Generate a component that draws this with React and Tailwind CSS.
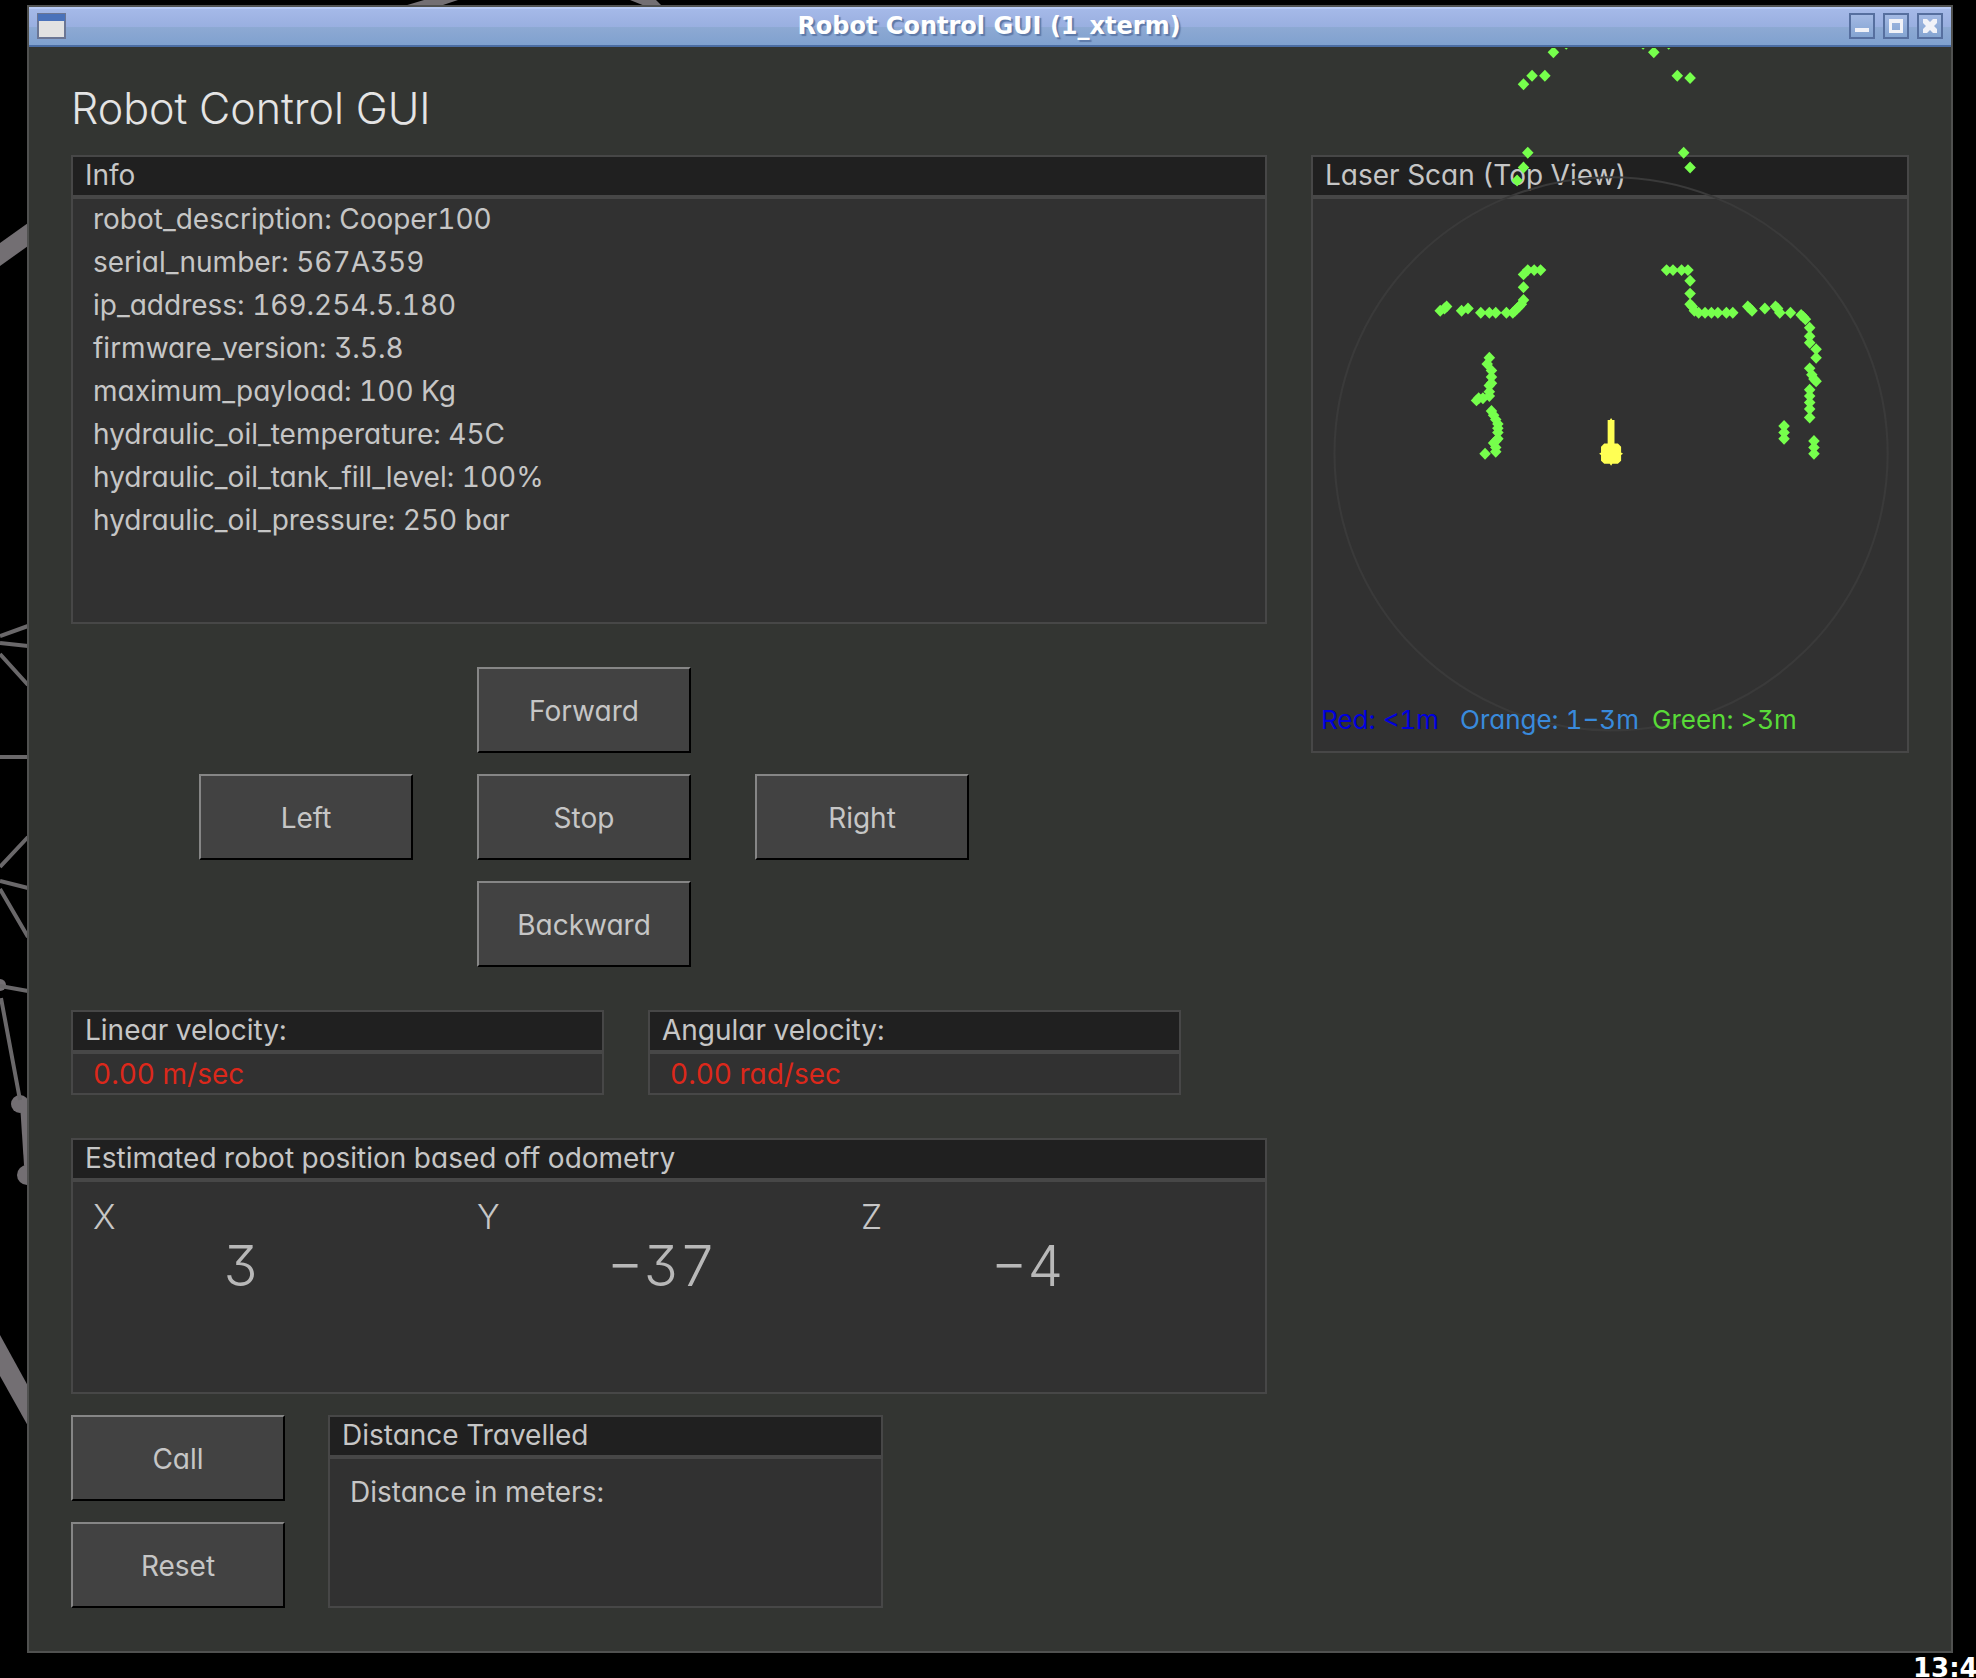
const INFO = [
  "robot_description: Cooper100",
  "serial_number: 567A359",
  "ip_address: 169.254.5.180",
  "firmware_version: 3.5.8",
  "maximum_payload: 100 Kg",
  "hydraulic_oil_temperature: 45C",
  "hydraulic_oil_tank_fill_level: 100%",
  "hydraulic_oil_pressure: 250 bar",
];

const POSITION = [
  { axis: "X", value: "3" },
  { axis: "Y", value: "−37" },
  { axis: "Z", value: "−4" },
];

// Laser returns as [x, y] in scan units, with the robot at the origin.
const SCAN = [
  [-27, -188], [-21, -192], [15, -192], [20, -188], [27, -192],
  [-37, -177], [-31, -177], [-41, -173], [31, -177], [37, -176],
  [-39, -141], [-41, -134], [-44, -128], [34, -141], [37, -134],
  [-33, -86], [-36, -86], [-39, -86], [-41, -84], [-41, -78], [-41, -72],
  [-42, -70], [-43, -69], [-44, -68], [-45, -67], [-46, -66], [-49, -66],
  [-54, -66], [-57, -66], [-61, -66],
  [-67, -68], [-70, -67], [-77, -69], [-78, -68], [-80, -67],
  [26, -86], [29, -86], [33, -86], [36, -86],
  [37, -81], [37, -75], [37, -70], [38, -69], [39, -67], [41, -66],
  [44, -66], [47, -66], [50, -66], [54, -66], [57, -66],
  [64, -69], [65, -68], [66, -67], [72, -68], [77, -69], [78, -68], [79, -66],
  [84, -66], [89, -65], [90, -64], [91, -63], [93, -59], [93, -55], [93, -52],
  [96, -49], [96, -45], [93, -40], [94, -37], [95, -35], [96, -34],
  [93, -30], [93, -27], [93, -24], [93, -21], [93, -17],
  [81, -13], [81, -10], [81, -7], [95, -6], [95, -3], [95, 0],
  [-57, -45], [-58, -42], [-56, -39], [-56, -36], [-56, -33], [-57, -32],
  [-57, -29], [-57, -27], [-60, -26], [-62, -26], [-63, -25],
  [-56, -20], [-55, -18], [-54, -16], [-53, -14], [-53, -12], [-53, -10],
  [-53, -7], [-54, -6], [-55, -5], [-54, -3], [-54, -1], [-59, 0],
];

function Panel({ title, className = "", children }) {
  return (
    <section className={`border-2 border-[#474747] bg-[#313131] ${className}`}>
      <h2 className="border-b-4 border-[#474747] bg-[#202020] px-3 pb-0.5 leading-[36px]">
        {title}
      </h2>
      {children}
    </section>
  );
}

function ControlButton({ children, className = "" }) {
  return (
    <button
      type="button"
      className={`h-[86px] w-full border-2 border-t-[#868686] border-r-black border-b-black border-l-[#868686] bg-[#424242] pt-0.5 ${className}`}
    >
      {children}
    </button>
  );
}

function TitleButton({ label, children }) {
  return (
    <button
      type="button"
      aria-label={label}
      className="flex size-[26px] items-center justify-center border-2 border-[#566f9f] bg-linear-to-b from-[#a3b9e4] to-[#84a4d1]"
    >
      <svg viewBox="0 0 14 14" className="size-[14px]" fill="#f1f2f8">
        {children}
      </svg>
    </button>
  );
}

function Wallpaper() {
  return (
    <svg
      aria-hidden="true"
      viewBox="0 0 1976 1678"
      preserveAspectRatio="xMinYMin slice"
      className="absolute inset-0 size-full"
    >
      <g fill="#736f73">
        <path d="M0 243 28 223V246L0 266Z" />
        <path d="M404 6 424 0H458L440 6Z" />
        <path d="M630 0H656L662 6H645Z" />
        <path d="M0 1335 28 1386V1426L0 1376Z" />
        <circle cx="0" cy="985" r="6" />
        <circle cx="20" cy="1104" r="9" />
        <circle cx="27" cy="1175" r="10" />
        <path d="M20 1104 28 1104V1175L24 1165Z" />
      </g>
      <g stroke="#6a686a" strokeWidth="4" fill="none">
        <path d="M0 636 28 626M0 643 28 646M0 654 28 685M0 757H28M0 867 28 837M0 881 28 888M0 889 28 937M0 986 28 991M1 998 20 1100" />
      </g>
    </svg>
  );
}

function LaserPlot() {
  return (
    <svg
      role="img"
      aria-label="Laser scan points around the robot"
      viewBox="-140.5 -190 280 330"
      className="pointer-events-none absolute inset-x-0 bottom-0 w-full"
    >
      <circle r="129.5" fill="none" stroke="#3a3a3a" strokeWidth="1" />
      <g fill="#76ff4c">
        {SCAN.map(([x, y], i) => (
          <path key={i} d={`M${x} ${y - 2.8}l2.7 2.8l-2.7 2.8l-2.7 -2.8z`} />
        ))}
      </g>
      <g fill="#ffff54">
        <path d="M-1.6 0V-15.8H-.6L0 -16.8 .6 -15.8H1.6V0Z" />
        <path d="M-3.2 -4.8H3.2L4.7 -3.3V-.6L5.6 0 4.7 .6V3.3L3.2 4.7H.6L0 5.6-.6 4.7H-3.2L-4.7 3.3V.6L-5.6 0-4.7 -.6V-3.3Z" />
      </g>
    </svg>
  );
}

export default function App() {
  return (
    <div className="relative flex min-h-screen flex-col overflow-hidden bg-black">
      <Wallpaper />

      <div className="relative mt-[5px] mr-[23px] ml-[27px] flex grow flex-col border-2 border-[#505150] bg-[#333532]">
        <header className="flex items-center border-t-2 border-b-2 border-t-[#b7c9f4] border-b-[#4b6da3] bg-[linear-gradient(#a5b9e8,#99afe0_50%,#8da9d3_50%,#80a1cf)] px-2 pb-0.5">
          <svg viewBox="0 0 29 26" className="h-[26px] w-[29px]">
            <rect x="1" y="1" width="27" height="24" fill="#e2e2e2" stroke="#6b7694" strokeWidth="2" />
            <rect x="1" y="1" width="27" height="7" fill="#4a72ba" />
          </svg>
          <div className="grow pl-[63px] text-center font-['DejaVu_Sans',sans-serif] text-[24px] leading-[34px] font-bold text-white [text-shadow:2px_2px_1px_#5d79a8]">
            Robot Control GUI (1_xterm)
          </div>
          <div className="flex gap-2">
            <TitleButton label="Minimize">
              <path d="M0 9H14V13H0Z" />
            </TitleButton>
            <TitleButton label="Maximize">
              <path fillRule="evenodd" d="M0 0H14V14H0ZM3 4V11H11V4Z" />
            </TitleButton>
            <TitleButton label="Close">
              <path d="M0 0H4L7 3 10 0H14V4L11 7 14 10V14H10L7 11 4 14H0V10L3 7 0 4Z" />
            </TitleButton>
          </div>
        </header>

        <main className="grow px-[42px] pt-[37px] pb-[43px] font-['Inter',sans-serif] text-[28px] text-[#c6c6c6] tabular-nums [font-feature-settings:'cv09','cv11']">
          <h1 className="mb-[23px] text-[43px] leading-[48px] font-light text-[#e4e4e4]">Robot Control GUI</h1>

          <div className="grid grid-cols-[2fr_1fr] items-start gap-[44px]">
            <div>
              <Panel title="Info">
                <ul className="flex flex-col gap-[3px] px-5 pb-[82px] leading-[40px]">
                  {INFO.map((line) => (
                    <li key={line}>{line}</li>
                  ))}
                </ul>
              </Panel>

              <div className="mt-[43px] ml-[128px] grid grid-cols-[repeat(3,214px)] gap-x-16 gap-y-[21px]">
                <ControlButton className="col-start-2">Forward</ControlButton>
                <ControlButton className="col-start-1">Left</ControlButton>
                <ControlButton>Stop</ControlButton>
                <ControlButton>Right</ControlButton>
                <ControlButton className="col-start-2">Backward</ControlButton>
              </div>

              <div className="mt-[43px] grid grid-cols-2 gap-[44px] pr-[86px]">
                <Panel title="Linear velocity:">
                  <p className="px-5 pt-0.5 leading-[37px] text-[#dc281b]">0.00 m/sec</p>
                </Panel>
                <Panel title="Angular velocity:">
                  <p className="px-5 pt-0.5 leading-[37px] text-[#dc281b]">0.00 rad/sec</p>
                </Panel>
              </div>

              <Panel title="Estimated robot position based off odometry" className="mt-[43px]">
                <dl className="grid grid-cols-3 px-5 pt-[15px] pb-[97px]">
                  {POSITION.map(({ axis, value }) => (
                    <div key={axis}>
                      <dt className="text-[34px] leading-[40px] font-light">{axis}</dt>
                      <dd className="pl-[130px] text-[56px] leading-[58px] font-light text-[#b8b8b8]">{value}</dd>
                    </div>
                  ))}
                </dl>
              </Panel>

              <div className="mt-[21px] flex gap-[43px]">
                <div className="flex w-[214px] flex-col gap-[21px]">
                  <ControlButton>Call</ControlButton>
                  <ControlButton>Reset</ControlButton>
                </div>
                <Panel title="Distance Travelled" className="w-[555px]">
                  <p className="px-5 pt-[13px] leading-[40px]">Distance in meters:</p>
                </Panel>
              </div>
            </div>

            <div className="relative">
              <Panel title="Laser Scan (Top View)" className="flex aspect-square flex-col">
                <div className="relative z-10 mt-auto grid grid-cols-[139px_192px_auto] px-2 pb-4 text-[26px] leading-[30px] whitespace-nowrap">
                  <span className="text-[#0000dd]">Red: &lt;1m</span>
                  <span className="text-[#398adc]">Orange: 1−3m</span>
                  <span className="text-[#59db38]">Green: &gt;3m</span>
                </div>
              </Panel>
              <LaserPlot />
            </div>
          </div>
        </main>
      </div>

      <footer className="relative flex h-[25px] justify-end overflow-hidden font-['DejaVu_Sans',sans-serif] text-[26px] leading-[30px] font-bold text-white">
        <time className="w-[63px] whitespace-nowrap">13:4</time>
      </footer>
    </div>
  );
}
